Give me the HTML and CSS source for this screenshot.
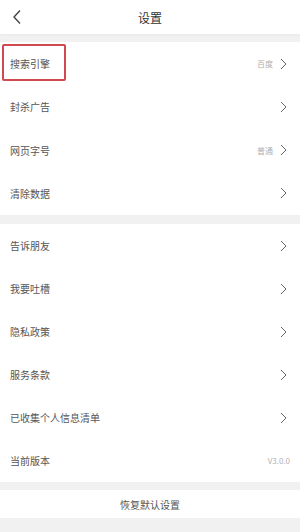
FILE: index.html
```html
<!DOCTYPE html>
<html lang="zh">
<head>
<meta charset="utf-8">
<link rel="stylesheet" href="styles.css">
</head>
<body>
<div class="page">
  <header class="topbar">
    <svg class="back" width="10" height="16" viewBox="0 0 10 16"><path d="M8 1.5 L2 8 L8 14.5" fill="none" stroke="#444" stroke-width="1.4"/></svg>
    <div class="title">设置</div>
  </header>
  <section class="group g1">
    <div class="row"><span class="label hl">搜索引擎</span><span class="value">百度</span><svg class="chev" width="7" height="12" viewBox="0 0 7 12"><path d="M1 1 L6 6 L1 11" fill="none" stroke="#666" stroke-width="1"/></svg></div>
    <div class="row"><span class="label">封杀广告</span><svg class="chev" width="7" height="12" viewBox="0 0 7 12"><path d="M1 1 L6 6 L1 11" fill="none" stroke="#666" stroke-width="1"/></svg></div>
    <div class="row"><span class="label">网页字号</span><span class="value">普通</span><svg class="chev" width="7" height="12" viewBox="0 0 7 12"><path d="M1 1 L6 6 L1 11" fill="none" stroke="#666" stroke-width="1"/></svg></div>
    <div class="row"><span class="label">清除数据</span><svg class="chev" width="7" height="12" viewBox="0 0 7 12"><path d="M1 1 L6 6 L1 11" fill="none" stroke="#666" stroke-width="1"/></svg></div>
  </section>
  <section class="group g2">
    <div class="row"><span class="label">告诉朋友</span><svg class="chev" width="7" height="12" viewBox="0 0 7 12"><path d="M1 1 L6 6 L1 11" fill="none" stroke="#666" stroke-width="1"/></svg></div>
    <div class="row"><span class="label">我要吐槽</span><svg class="chev" width="7" height="12" viewBox="0 0 7 12"><path d="M1 1 L6 6 L1 11" fill="none" stroke="#666" stroke-width="1"/></svg></div>
    <div class="row"><span class="label">隐私政策</span><svg class="chev" width="7" height="12" viewBox="0 0 7 12"><path d="M1 1 L6 6 L1 11" fill="none" stroke="#666" stroke-width="1"/></svg></div>
    <div class="row"><span class="label">服务条款</span><svg class="chev" width="7" height="12" viewBox="0 0 7 12"><path d="M1 1 L6 6 L1 11" fill="none" stroke="#666" stroke-width="1"/></svg></div>
    <div class="row"><span class="label">已收集个人信息清单</span><svg class="chev" width="7" height="12" viewBox="0 0 7 12"><path d="M1 1 L6 6 L1 11" fill="none" stroke="#666" stroke-width="1"/></svg></div>
    <div class="row"><span class="label">当前版本</span><span class="value ver">V3.0.0</span></div>
  </section>
  <div class="reset">恢复默认设置</div>
</div>
</body>
</html>
```
FILE: styles.css
```css
html, body {
  margin: 0;
  padding: 0;
  background: #f1f1f1;
}
.page {
  width: 300px;
  height: 532px;
  background: #f1f1f1;
  font-family: "Noto Sans CJK SC", "Noto Sans", sans-serif;
  overflow: hidden;
}
.topbar {
  height: 34px;
  background: #fff;
  display: flex;
  align-items: center;
  justify-content: center;
  position: relative;
  box-shadow: 0 1px 2px rgba(0,0,0,0.04);
}
.back {
  position: absolute;
  left: 12px;
  top: 9px;
}
.title {
  font-size: 12px;
  color: #333;
}
.group {
  background: #fff;
  padding: 0 10px;
}
.g1 {
  margin-top: 8px;
}
.g2 {
  margin-top: 9px;
}
.g1 .row {
  height: 43.25px;
}
.g2 .row {
  height: 43px;
}
.row {
  display: flex;
  align-items: center;
  gap: 7px;
}
.label {
  font-size: 10px;
  color: #555;
  flex: 1;
}
.hl {
  position: relative;
}
.hl::before {
  content: "";
  position: absolute;
  left: -8px;
  top: -12px;
  width: 60px;
  height: 33px;
  border: 2px solid #d0494f;
  border-radius: 2px;
}
.value {
  font-size: 8px;
  color: #b0b0b0;
}
.ver {
  margin-right: 0;
}
.chev {
  display: block;
  margin-right: 3px;
}
.reset {
  margin-top: 8px;
  height: 28px;
  background: #fff;
  display: flex;
  align-items: center;
  justify-content: center;
  font-size: 10px;
  color: #555;
}
```
